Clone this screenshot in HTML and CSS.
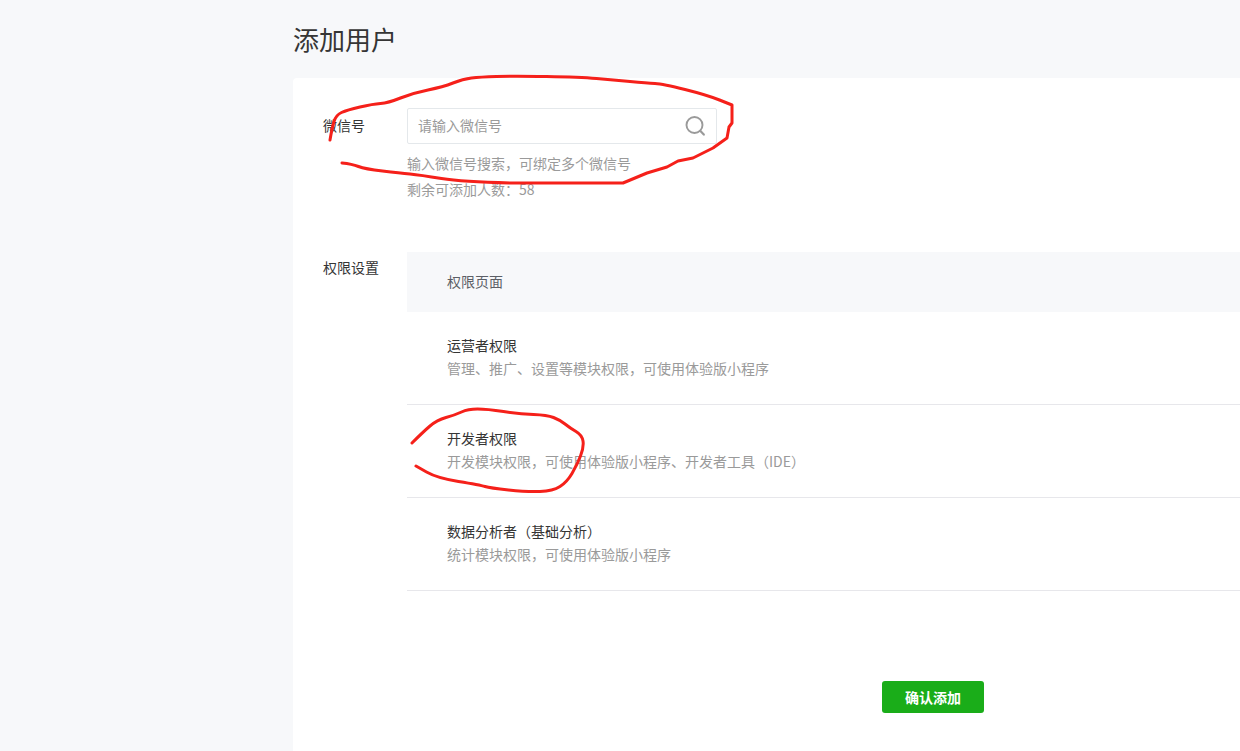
FILE: index.html
```html
<!DOCTYPE html>
<html lang="zh-CN">
<head>
    <meta charset="UTF-8">
    <title>添加用户</title>
    <link rel="stylesheet" href="styles.css">
</head>
<body>
    <div class="main">
        <h1 class="page-title">添加用户</h1>
        <div class="card">
            <div class="form-row">
                <label class="form-label" for="wechat_id">微信号</label>
                <div class="form-body">
                    <div class="search-box">
                        <input type="text" id="wechat_id" placeholder="请输入微信号">
                        <svg class="search-icon" width="22" height="22" viewBox="0 0 22 22" fill="none" stroke="#9a9a9a">
                            <circle cx="10.5" cy="10" r="8" stroke-width="1.9"/>
                            <path d="M16.2 15.8l3.6 3.8" stroke-width="2.2" stroke-linecap="round"/>
                        </svg>
                    </div>
                    <p class="tips first">输入微信号搜索，可绑定多个微信号</p>
                    <p class="tips">剩余可添加人数：58</p>
                </div>
            </div>

            <div class="form-row perm-row">
                <div class="form-label">权限设置</div>
                <div class="form-body">
                    <div class="perm-head">权限页面</div>
                    <div class="perm-item">
                        <div class="perm-name">运营者权限</div>
                        <div class="perm-desc">管理、推广、设置等模块权限，可使用体验版小程序</div>
                    </div>
                    <div class="perm-item">
                        <div class="perm-name">开发者权限</div>
                        <div class="perm-desc">开发模块权限，可使用体验版小程序、开发者工具（IDE）</div>
                    </div>
                    <div class="perm-item">
                        <div class="perm-name">数据分析者（基础分析）</div>
                        <div class="perm-desc">统计模块权限，可使用体验版小程序</div>
                    </div>
                </div>
            </div>

            <div class="actions">
                <button class="btn-primary">确认添加</button>
            </div>
        </div>
    </div>

    <!-- hand drawn red marks on top of the screenshot -->
    <svg class="scribble" width="1240" height="751" viewBox="0 0 1240 751" fill="none" stroke="#f5201a" stroke-width="3" stroke-linecap="round" stroke-linejoin="round">
        <path d="M330 140Q332 128 334 121.5Q336 115 341.5 112.5Q347 110 360 107Q373 104 380.5 103.5Q388 103 400.5 98Q413 93 428 90Q443 87 453 83Q463 79 471.5 78Q480 77 496.5 76.5Q513 76 546.5 76.5Q580 77 596.5 78.5Q613 80 630 81.5Q647 83 655 83.5Q663 84 685 89.5Q707 95 719.5 100L732 105L732 123L729 127L727 138Q720 143 713 148Q703 153 693 158Q685.5 159.5 678 161Q672.5 164 667 167Q657 170 647 173Q635 178 623 183L513 183Q463 182 441.5 178.5Q420 175 410 174Q400 173 382.5 171Q365 169 358.5 166.5Q352 164 342 163"/>
        <path d="M412 443Q423 432 430 426Q437 420 446 417.5Q455 415 461.5 412Q468 409 477.5 409Q487 409 503.5 411.5Q520 414 533.5 414.5Q547 415 553.5 417.5Q560 420 565 424Q570 428 576 431.5Q582 435 583 441Q584 447 580.5 456Q577 465 572 473.5Q567 482 560 486.5Q553 491 540 491.5Q527 492 508.5 490Q490 488 485 486.5Q480 485 458.5 481.5Q437 478 426.5 472L416 466"/>
    </svg>
</body>
</html>
```

FILE: styles.css
```css
* {
    box-sizing: border-box;
}

html, body {
    height: 100%;
}

body {
    margin: 0;
    background-color: #f7f8fa;
    color: #353535;
    font-family: "Noto Sans CJK SC", "Noto Sans", sans-serif;
    font-size: 14px;
    overflow: hidden;
}

.main {
    margin-left: 293px;
    height: 100%;
    display: flex;
    flex-direction: column;
}

.page-title {
    margin: 0;
    height: 78px;
    line-height: 78px;
    font-size: 26px;
    font-weight: 400;
    color: #353535;
}

.card {
    flex: 1;
    background: #fff;
    border-radius: 4px 0 0 0;
    padding: 30px 0 0 30px;
}

.form-row {
    display: flex;
}

.form-label {
    width: 84px;
    flex-shrink: 0;
    line-height: 34px;
}

.form-body {
    flex: 1;
}

.search-box {
    width: 310px;
    height: 36px;
    border: 1px solid #e4e8eb;
    border-radius: 2px;
    display: flex;
    align-items: center;
    padding: 0 10px;
}

.search-box input {
    flex: 1;
    min-width: 0;
    height: 32px;
    border: none;
    outline: none;
    padding: 0 0 2px;
    font: inherit;
    color: #353535;
}

.search-box input::placeholder {
    color: #9a9a9a;
}

.tips {
    margin: 0;
    line-height: 26px;
    color: #9a9a9a;
}

.tips.first {
    margin-top: 6px;
}

.perm-row {
    margin-top: 50px;
}

.perm-row .form-label {
    line-height: 30px;
}

.perm-head {
    height: 60px;
    line-height: 58px;
    padding-left: 40px;
    background: #f7f8fa;
    color: #5c5f66;
}

.perm-item {
    height: 93px;
    padding: 22px 0 0 40px;
    border-bottom: 1px solid #e7e7eb;
}

.perm-name {
    line-height: 22px;
}

.perm-desc {
    margin-top: 1px;
    line-height: 22px;
    color: #9a9a9a;
}

.actions {
    margin-top: 90px;
    padding-left: 559px;
}

.btn-primary {
    width: 102px;
    height: 32px;
    border: none;
    border-radius: 3px;
    background: #1aad19;
    color: #fff;
    font: inherit;
    font-weight: 700;
    cursor: pointer;
}

.scribble {
    position: absolute;
    top: 0;
    left: 0;
    pointer-events: none;
}
```
